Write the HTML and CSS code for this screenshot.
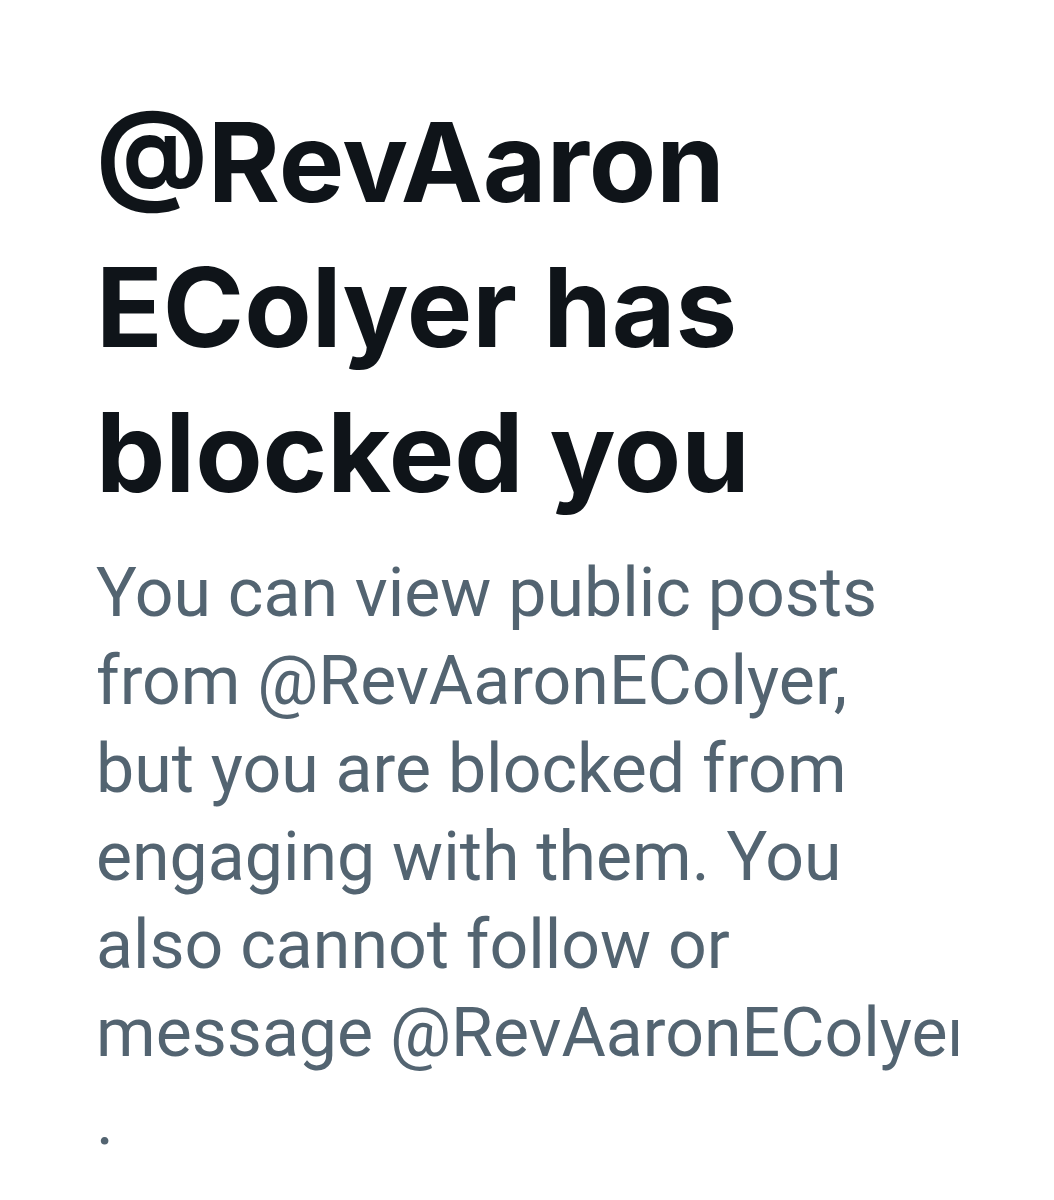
FILE: index.html
```html
<!DOCTYPE html>
<html lang="en">
<head>
<meta charset="utf-8">
<title>Blocked</title>
<link rel="stylesheet" href="styles.css">
</head>
<body>
<main class="notice">
  <h1 class="title">@RevAaron<br>EColyer has<br>blocked you</h1>
  <p class="desc">You can view public posts<br>from @RevAaronEColyer,<br>but you are blocked from<br>engaging with them. You<br>also cannot follow or<br>message @RevAaronEColyer<br>.</p>
</main>
</body>
</html>
```

FILE: styles.css
```css
html, body {
  margin: 0;
  padding: 0;
  background: #ffffff;
}
.notice {
  padding: 90px 0 0 96px;
  width: 862px;
  overflow: hidden;
  font-family: Roboto, "Liberation Sans", sans-serif;
}
.title {
  margin: 0;
  font-family: Inter, Roboto, "Liberation Sans", sans-serif;
  font-size: 110px;
  line-height: 145px;
  font-weight: 700;
  letter-spacing: 0;
  color: #0f1419;
  white-space: nowrap;
}
.desc {
  margin: 24px 0 0;
  font-size: 68px;
  line-height: 88px;
  font-weight: 400;
  color: #536471;
  white-space: nowrap;
  overflow: hidden;
}
```
